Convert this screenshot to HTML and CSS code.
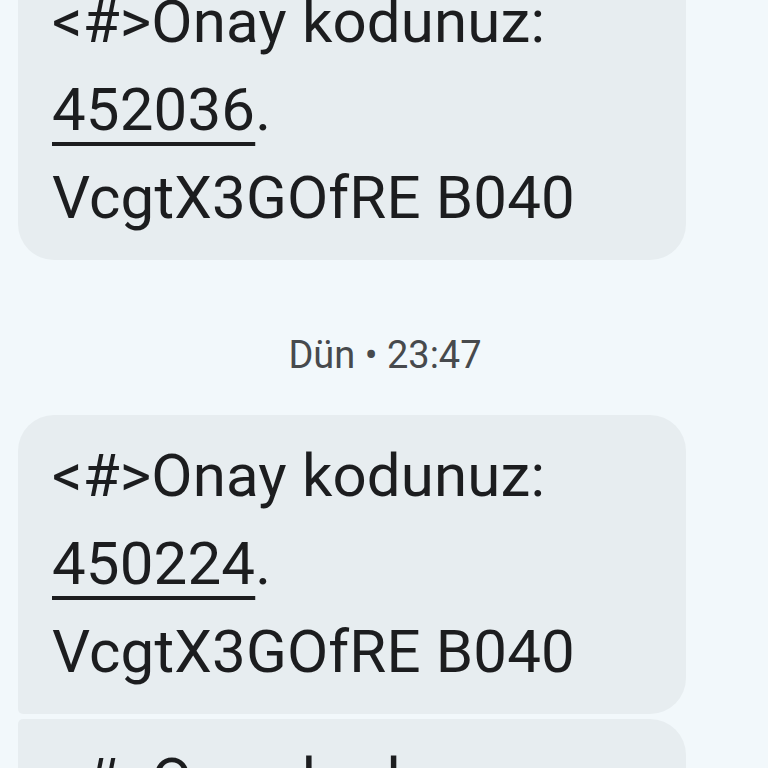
FILE: index.html
```html
<!DOCTYPE html>
<html lang="tr">
<head>
<meta charset="utf-8">
<link rel="stylesheet" href="styles.css">
</head>
<body>
<div class="thread">
  <div class="bubble bubble-first">
    <p class="msg">&lt;#&gt;Onay kodunuz:<br><span class="code">452036</span>.<br>VcgtX3GOfRE B040</p>
  </div>
  <div class="stamp">Dün • 23:47</div>
  <div class="bubble bubble-top">
    <p class="msg">&lt;#&gt;Onay kodunuz:<br><span class="code">450224</span>.<br>VcgtX3GOfRE B040</p>
  </div>
  <div class="bubble bubble-next">
    <p class="msg">&lt;#&gt;Onay kodunuz:<br><span class="code">450224</span>.<br>VcgtX3GOfRE B040</p>
  </div>
</div>
</body>
</html>
```

FILE: styles.css
```css
html, body {
  margin: 0;
  padding: 0;
  background: #f2f8fb;
  overflow: hidden;
  height: 768px;
}

.thread {
  display: flex;
  flex-direction: column;
  padding: 0 82px 0 18px;
  margin-top: -39px;
  font-family: Roboto, "Noto Sans", sans-serif;
}

.bubble {
  background: #e7edf0;
  border-radius: 36px;
  padding: 17px 34px 18px;
}

.bubble-top {
  border-bottom-left-radius: 5px;
}

.bubble-next {
  margin-top: 5px;
  border-top-left-radius: 5px;
}

.msg {
  margin: 0;
  font-size: 60px;
  line-height: 88px;
  letter-spacing: 0.15px;
  color: #1c1d1f;
}

.code {
  text-decoration: underline;
  text-decoration-thickness: 4px;
  text-underline-offset: 12px;
}

.stamp {
  height: 155px;
  padding: 73px 0 0 66px;
  box-sizing: border-box;
  text-align: center;
  font-size: 38px;
  color: #474a4d;
}
```
